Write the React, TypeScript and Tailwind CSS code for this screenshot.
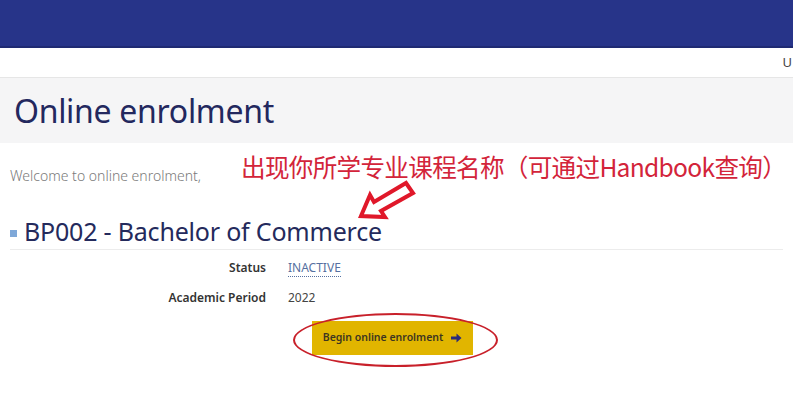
import React from "react";

const RedArrow = () => (
	<svg width="62" height="42" viewBox="0 0 62 42" className="absolute left-[356px] top-[179px]">
		<path
			d="M5 37 L14 16 L18 23 L50 4 L57 14 L25 32 L29 38 Z"
			fill="#fff"
			stroke="#e0182a"
			strokeWidth="4"
			strokeLinejoin="miter"
		/>
	</svg>
);

export default function App() {
	return (
		<div className="relative w-[793px] h-[404px] overflow-hidden bg-white font-['Noto_Sans',sans-serif]">
			<div className="h-[48px] bg-[#273489] border-b-2 border-[#1f2a72]" />
			<div className="h-[30px] flex items-center justify-end border-b border-[#e6e6e6] text-[13px] text-[#444]">
				<span className="pr-[1px]">U</span>
			</div>
			<div className="h-[65px] bg-[#f5f5f6] flex items-center pl-[14px]">
				<h1 className="text-[32px] leading-none text-[#23285e] tracking-[-0.3px]">
					Online enrolment
				</h1>
			</div>

			<div className="px-[10px]">
				<p className="mt-[24px] text-[14px] leading-[18px] text-[#7a7a7a] font-light">
					Welcome to online enrolment,
				</p>

				<div className="mt-[31px] flex items-center gap-[7px] border-b border-[#ececec] pb-[3px]">
					<span className="w-[7px] h-[7px] bg-[#7fa8d8] mt-[5px]" />
					<h2 className="text-[25px] leading-[30px] text-[#242a5c] tracking-[-0.2px]">
						BP002 - Bachelor of Commerce
					</h2>
				</div>

				<div className="mt-[9px] grid grid-cols-[256px_1fr] gap-x-[22px] gap-y-[12px] text-[12px] leading-[18px]">
					<span className="text-right font-semibold text-[#333]">Status</span>
					<span>
						<span className="text-[#5670a0] border-b border-dotted border-[#5670a0]">INACTIVE</span>
					</span>
					<span className="text-right font-semibold text-[#333]">Academic Period</span>
					<span className="text-[#444]">2022</span>
				</div>

				<div className="mt-[14px] pl-[302px]">
					<button className="w-[161px] h-[34px] bg-[#e1b500] flex items-center justify-center gap-[8px] text-[10.5px] font-semibold text-[#3d3520]">
						Begin online enrolment
						<svg width="11" height="10" viewBox="0 0 11 10">
							<path d="M0 3.5 H5.5 V0.5 L10.5 5 L5.5 9.5 V6.5 H0 Z" fill="#2a2a7a" />
						</svg>
					</button>
				</div>
			</div>

			<p className="absolute left-[241px] top-[151px] text-[24.6px] leading-[30px] text-[#d3243a] whitespace-nowrap font-['Noto_Sans_CJK_SC',sans-serif] tracking-[-0.7px]">
				出现你所学专业课程名称（可通过Handbook查询）
			</p>
			<RedArrow />
			<div className="absolute left-[293px] top-[313px] w-[205px] h-[54px] rounded-[50%] border-2 border-[#c8202a]" />
		</div>
	);
}
